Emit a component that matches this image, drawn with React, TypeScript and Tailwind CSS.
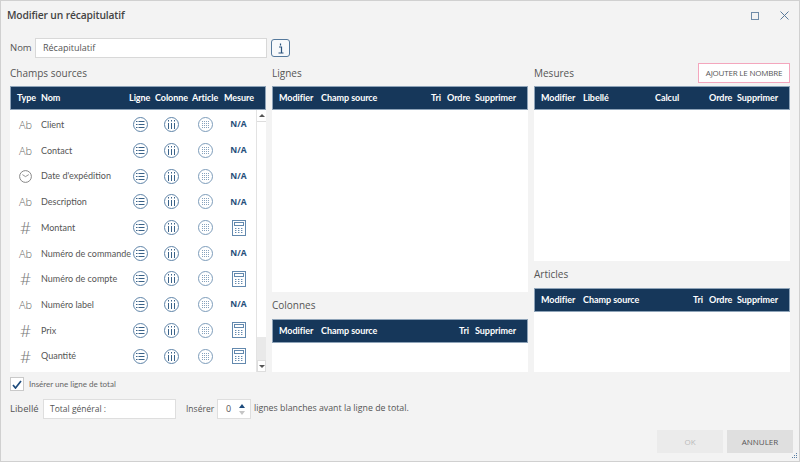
const navy = "bg-[#16375a]";

const ListIcon = () => (
  <svg width="15" height="15" viewBox="0 0 15 15" fill="none" className="block">
    <circle cx="7.5" cy="7.5" r="7" stroke="#5f84a8" strokeWidth="1" />
    <g stroke="#3a6288" strokeWidth="1">
      <path d="M5.5 4.5h6M5.5 7.5h6M5.5 10.5h6" />
      <path d="M3 4.5h1.5M3 7.5h1.5M3 10.5h1.5" />
    </g>
  </svg>
);

const ColumnIcon = () => (
  <svg width="15" height="15" viewBox="0 0 15 15" fill="none" className="block">
    <circle cx="7.5" cy="7.5" r="7" stroke="#5f84a8" strokeWidth="1" />
    <g stroke="#3a6288" strokeWidth="1">
      <path d="M4.5 6v6M7.5 6v6M10.5 6v6" />
      <path d="M4.5 3v1.5M7.5 3v1.5M10.5 3v1.5" />
    </g>
  </svg>
);

const GridIcon = () => (
  <svg width="15" height="15" viewBox="0 0 15 15" fill="none" className="block">
    <circle cx="7.5" cy="7.5" r="7" stroke="#7d9cba" strokeWidth="1" />
    <g fill="#86a2bd">
      {[4, 6, 8, 10].map((x) =>
        [4, 6, 8, 10].map((y) => <rect key={`${x}-${y}`} x={x} y={y} width="1" height="1" />),
      )}
    </g>
  </svg>
);

const CalcIcon = () => (
  <svg width="14" height="16" viewBox="0 0 14 16" fill="none" className="block">
    <rect x="0.5" y="0.5" width="13" height="15" stroke="#6389ae" />
    <rect x="2.5" y="2.5" width="9" height="3" stroke="#6389ae" />
    <g fill="#6389ae">
      {[3, 6, 9].map((x) =>
        [8, 10, 12].map((y) => <rect key={`${x}-${y}`} x={x} y={y} width="1.4" height="1" />),
      )}
    </g>
  </svg>
);

const ClockIcon = () => (
  <svg width="13" height="13" viewBox="0 0 13 13" fill="none" className="block">
    <circle cx="6.5" cy="6.5" r="5.9" stroke="#7a7a7a" strokeWidth="0.9" />
    <path d="M3.4 4.6 6.5 6.6 9.8 4.6" stroke="#7a7a7a" strokeWidth="0.8" />
  </svg>
);

type Kind = "text" | "num" | "date";

const fields: { kind: Kind; name: string }[] = [
  { kind: "text", name: "Client" },
  { kind: "text", name: "Contact" },
  { kind: "date", name: "Date d'expédition" },
  { kind: "text", name: "Description" },
  { kind: "num", name: "Montant" },
  { kind: "text", name: "Numéro de commande" },
  { kind: "num", name: "Numéro de compte" },
  { kind: "text", name: "Numéro label" },
  { kind: "num", name: "Prix" },
  { kind: "num", name: "Quantité" },
];

const TypeIcon = ({ kind }: { kind: Kind }) => {
  if (kind === "date") return <ClockIcon />;
  if (kind === "num") return <span className="text-[17px] leading-none font-light text-[#777]">#</span>;
  return <span className="text-[11px] leading-none font-light text-[#666]">Ab</span>;
};

const FieldRow = ({ kind, name }: { kind: Kind; name: string }) => (
  <div className="flex h-[25.7px] items-center">
    <div className="flex w-[31px] justify-center">
      <TypeIcon kind={kind} />
    </div>
    <div className="w-[84px] text-[9px] whitespace-nowrap text-[#555] [font-family:Lato]">{name}</div>
    <div className="flex w-[31px] justify-center">
      <ListIcon />
    </div>
    <div className="flex w-[31px] justify-center">
      <ColumnIcon />
    </div>
    <div className="flex w-[37px] justify-center">
      <GridIcon />
    </div>
    <div className="flex w-[29px] justify-center text-[8.5px] font-bold text-[#274f7a]">
      {kind === "num" ? <CalcIcon /> : "N/A"}
    </div>
  </div>
);

const TableHead = ({ cells }: { cells: [string, string][] }) => (
  <div
    className={`flex h-[24px] items-center border border-[#8ea3b8] ${navy} text-[9px] font-bold tracking-[-0.05px] whitespace-nowrap text-white [font-family:Lato]`}
  >
    {cells.map(([label, width]) => (
      <div key={label} className={width}>
        {label}
      </div>
    ))}
  </div>
);

const SectionTitle = ({ children }: { children: string }) => (
  <div className="text-[10px] leading-[15px] text-[#555]">{children}</div>
);

const Scrollbar = () => (
  <div className="flex w-[10px] flex-col border-l border-[#e3e3e3] bg-[#e9e9e9]">
    <div className="flex h-[12px] items-center justify-center border-b border-[#ddd] bg-white">
      <div className="h-0 w-0 border-x-[3px] border-b-[3px] border-x-transparent border-b-[#555]" />
    </div>
    <div className="h-[215px] bg-white" />
    <div className="flex-1" />
    <div className="flex h-[12px] items-center justify-center border border-[#ddd] bg-white">
      <div className="h-0 w-0 border-x-[3px] border-t-[3px] border-x-transparent border-t-[#555]" />
    </div>
  </div>
);

const App = () => {
  return (
    <div
      className="relative flex h-[462px] w-[800px] flex-col overflow-hidden border border-[#d0d0d0] bg-[#f3f3f3]"
      style={{ fontFamily: '"Open Sans", "Noto Sans", sans-serif' }}
    >
      <div className="flex h-[29px] items-center justify-between pr-[10px] pl-[6px]">
        <div className="text-[10.3px] font-semibold tracking-[-0.15px] text-[#444]">Modifier un récapitulatif</div>
        <div className="flex items-center gap-[21px]">
          <div className="h-[8px] w-[8px] border-[1.5px] border-[#6f8ba8]" />
          <svg width="9" height="9" viewBox="0 0 9 9" fill="none">
            <path d="M0.5 0.5l8 8M8.5 0.5l-8 8" stroke="#5b7b9c" />
          </svg>
        </div>
      </div>

      <div className="mt-[8px] flex h-[20px] items-center pl-[9px]">
        <span className="w-[25px] text-[9.5px] text-[#555]">Nom</span>
        <div className="flex h-[20px] w-[232px] items-center border border-[#d8d8d8] bg-white pl-[7px] text-[9px] text-[#555]">
          Récapitulatif
        </div>
        <div className="ml-[4px] flex h-[18px] w-[19px] items-center justify-center rounded-[3px] border border-[#55799c] bg-[#f7f9fb]">
          <svg width="9" height="12" viewBox="0 0 9 12" fill="none">
            <path d="M3 5h2.5v6M2.5 11h5M4.5 1.5v2" stroke="#29527c" strokeWidth="1.2" />
          </svg>
        </div>
      </div>

      <div className="mt-[3px] flex gap-[6px] px-[9px]">
        <div className="flex w-[256px] flex-col">
          <div className="flex h-[25px] items-center pb-[1px]">
            <SectionTitle>Champs sources</SectionTitle>
          </div>
          <TableHead
            cells={[
              ["Type", "w-[24px] ml-[6px]"],
              ["Nom", "w-[88px]"],
              ["Ligne", "w-[26px]"],
              ["Colonne", "w-[37px]"],
              ["Article", "w-[32px]"],
              ["Mesure", ""],
            ]}
          />
          <div className="flex h-[262px]">
            <div className="flex-1 bg-white pt-[2px]">
              {fields.map((field) => (
                <FieldRow key={field.name} kind={field.kind} name={field.name} />
              ))}
            </div>
            <Scrollbar />
          </div>
        </div>

        <div className="flex w-[256px] flex-col">
          <div className="flex h-[25px] items-center pb-[1px]">
            <SectionTitle>Lignes</SectionTitle>
          </div>
          <TableHead
            cells={[
              ["Modifier", "w-[42px] ml-[6px]"],
              ["Champ source", "w-[110px]"],
              ["Tri", "w-[16px]"],
              ["Ordre", "w-[28px]"],
              ["Supprimer", ""],
            ]}
          />
          <div className="h-[182px] bg-white" />
          <div className="flex h-[27px] items-center">
            <SectionTitle>Colonnes</SectionTitle>
          </div>
          <TableHead
            cells={[
              ["Modifier", "w-[42px] ml-[6px]"],
              ["Champ source", "w-[138px]"],
              ["Tri", "w-[16px]"],
              ["Supprimer", ""],
            ]}
          />
          <div className="h-[29px] bg-white" />
        </div>

        <div className="flex w-[256px] flex-col">
          <div className="flex h-[25px] items-center justify-between pb-[1px]">
            <SectionTitle>Mesures</SectionTitle>
            <div className="flex h-[20px] w-[92px] items-center justify-center border border-[#f4a6bd] bg-white text-[8px] tracking-[-0.2px] whitespace-nowrap text-[#555]">
              AJOUTER LE NOMBRE
            </div>
          </div>
          <TableHead
            cells={[
              ["Modifier", "w-[42px] ml-[6px]"],
              ["Libellé", "w-[72px]"],
              ["Calcul", "w-[54px]"],
              ["Ordre", "w-[28px]"],
              ["Supprimer", ""],
            ]}
          />
          <div className="h-[151px] bg-white" />
          <div className="flex h-[27px] items-center">
            <SectionTitle>Articles</SectionTitle>
          </div>
          <TableHead
            cells={[
              ["Modifier", "w-[42px] ml-[6px]"],
              ["Champ source", "w-[110px]"],
              ["Tri", "w-[16px]"],
              ["Ordre", "w-[28px]"],
              ["Supprimer", ""],
            ]}
          />
          <div className="h-[60px] bg-white" />
        </div>
      </div>

      <div className="mt-[5px] flex h-[14px] items-center pl-[9px]">
        <div className="flex h-[14px] w-[14px] items-center justify-center border border-[#c9c9c9] bg-white">
          <svg width="10" height="9" viewBox="0 0 10 9" fill="none">
            <path d="M1 5l2.5 3L9 1" stroke="#1d4b7c" strokeWidth="1.7" />
          </svg>
        </div>
        <span className="ml-[5px] text-[8px] text-[#666] [font-family:Lato]">Insérer une ligne de total</span>
      </div>

      <div className="mt-[8px] flex h-[20px] items-center pl-[9px] text-[9.5px] text-[#555]">
        <span className="w-[33px]">Libellé</span>
        <div className="flex h-[20px] w-[133px] items-center border border-[#dedede] bg-white pl-[6px] text-[8.5px]">
          Total général :
        </div>
        <span className="ml-[10px] w-[31px] text-[8.5px]">Insérer</span>
        <div className="flex h-[20px] w-[34px] items-center justify-between border border-[#dedede] bg-white pr-[5px] pl-[8px] text-[9px]">
          <span>0</span>
          <div className="flex flex-col gap-[3px]">
            <div className="h-0 w-0 border-x-[3px] border-b-[4px] border-x-transparent border-b-[#1d4b7c]" />
            <div className="h-0 w-0 border-x-[3px] border-t-[4px] border-x-transparent border-t-[#c5c5c5]" />
          </div>
        </div>
        <span className="ml-[3px] text-[8.8px] whitespace-nowrap">lignes blanches avant la ligne de total.</span>
      </div>

      <div className="mt-[11px] flex justify-end gap-[4px] pr-[6px]">
        <div className="flex h-[23px] w-[66px] items-center justify-center bg-[#ebebeb] text-[8px] text-[#bbb]">OK</div>
        <div className="flex h-[23px] w-[66px] items-center justify-center bg-[#dfdfdf] text-[8px] text-[#555]">ANNULER</div>
      </div>

      <svg width="7" height="7" viewBox="0 0 7 7" className="absolute right-[1px] bottom-[1px]" fill="#5b80a5">
        <rect x="5" y="0" width="1" height="1" />
        <rect x="3" y="2" width="1" height="1" />
        <rect x="5" y="2" width="1" height="1" />
        <rect x="1" y="4" width="1" height="1" />
        <rect x="3" y="4" width="1" height="1" />
        <rect x="5" y="4" width="1" height="1" />
      </svg>
    </div>
  );
};

export default App;
